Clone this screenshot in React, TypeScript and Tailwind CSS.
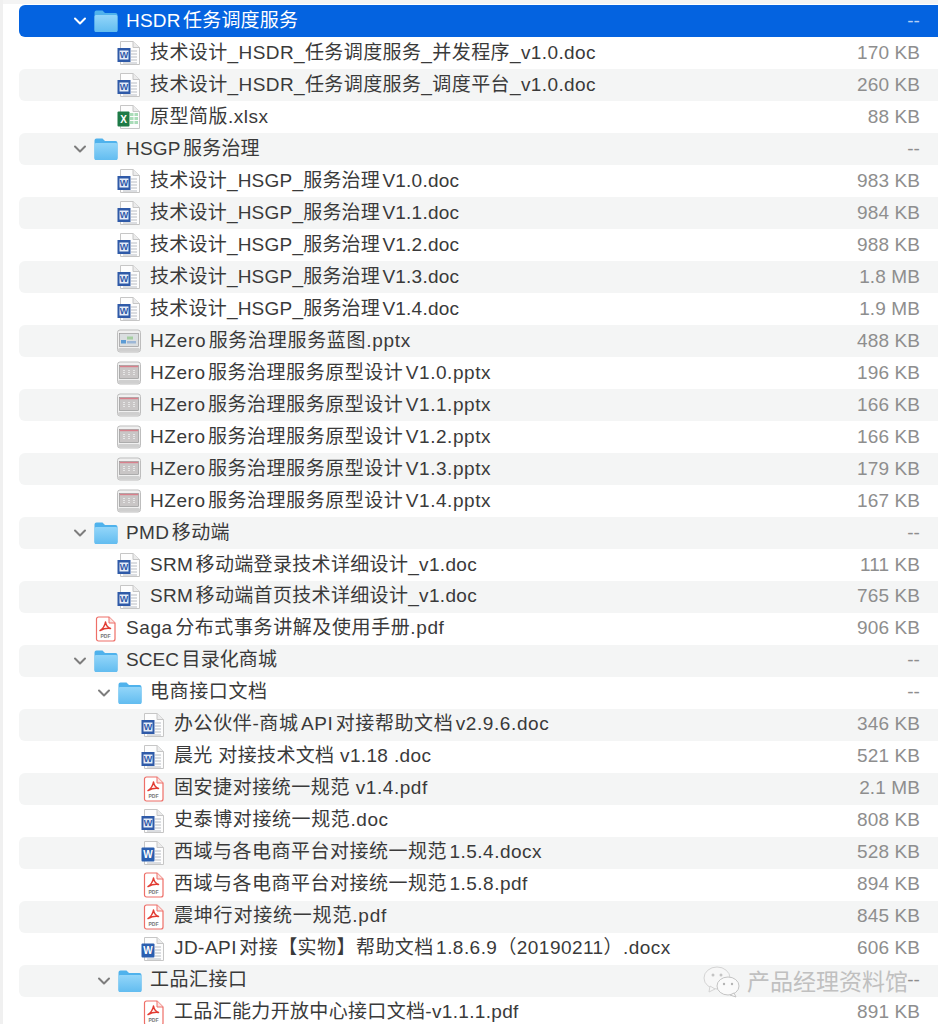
import React from "react";

type Kind = "folder" | "word" | "wordnew" | "excel" | "ppt" | "pptblue" | "pdf";
type Row = { name: string; size: string; kind: Kind; level: number; t: string };

const rows: Row[] = [
  { name: "HSDR任务调度服务", size: "--", kind: "folder", level: 0, t: "tracking-[0.2px]" },
  { name: "技术设计_HSDR_任务调度服务_并发程序_v1.0.doc", size: "170 KB", kind: "word", level: 1, t: "tracking-[0.4px]" },
  { name: "技术设计_HSDR_任务调度服务_调度平台_v1.0.doc", size: "260 KB", kind: "word", level: 1, t: "tracking-[0.4px]" },
  { name: "原型简版.xlsx", size: "88 KB", kind: "excel", level: 1, t: "tracking-[0.5px]" },
  { name: "HSGP服务治理", size: "--", kind: "folder", level: 0, t: "tracking-[0.2px]" },
  { name: "技术设计_HSGP_服务治理V1.0.doc", size: "983 KB", kind: "word", level: 1, t: "tracking-[0.22px]" },
  { name: "技术设计_HSGP_服务治理V1.1.doc", size: "984 KB", kind: "word", level: 1, t: "tracking-[0.22px]" },
  { name: "技术设计_HSGP_服务治理V1.2.doc", size: "988 KB", kind: "word", level: 1, t: "tracking-[0.22px]" },
  { name: "技术设计_HSGP_服务治理V1.3.doc", size: "1.8 MB", kind: "word", level: 1, t: "tracking-[0.22px]" },
  { name: "技术设计_HSGP_服务治理V1.4.doc", size: "1.9 MB", kind: "word", level: 1, t: "tracking-[0.22px]" },
  { name: "HZero服务治理服务蓝图.pptx", size: "488 KB", kind: "pptblue", level: 1, t: "tracking-[0.7px]" },
  { name: "HZero服务治理服务原型设计V1.0.pptx", size: "196 KB", kind: "ppt", level: 1, t: "tracking-[0.55px]" },
  { name: "HZero服务治理服务原型设计V1.1.pptx", size: "166 KB", kind: "ppt", level: 1, t: "tracking-[0.55px]" },
  { name: "HZero服务治理服务原型设计V1.2.pptx", size: "166 KB", kind: "ppt", level: 1, t: "tracking-[0.55px]" },
  { name: "HZero服务治理服务原型设计V1.3.pptx", size: "179 KB", kind: "ppt", level: 1, t: "tracking-[0.55px]" },
  { name: "HZero服务治理服务原型设计V1.4.pptx", size: "167 KB", kind: "ppt", level: 1, t: "tracking-[0.55px]" },
  { name: "PMD移动端", size: "--", kind: "folder", level: 0, t: "tracking-[0.4px]" },
  { name: "SRM移动端登录技术详细设计_v1.doc", size: "111 KB", kind: "word", level: 1, t: "tracking-[0.33px]" },
  { name: "SRM移动端首页技术详细设计_v1.doc", size: "765 KB", kind: "word", level: 1, t: "tracking-[0.33px]" },
  { name: "Saga分布式事务讲解及使用手册.pdf", size: "906 KB", kind: "pdf", level: 0, t: "tracking-[0.6px]" },
  { name: "SCEC目录化商城", size: "--", kind: "folder", level: 0, t: "tracking-[0.1px]" },
  { name: "电商接口文档", size: "--", kind: "folder", level: 1, t: "tracking-[0.6px]" },
  { name: "办公伙伴-商城API对接帮助文档v2.9.6.doc", size: "346 KB", kind: "word", level: 2, t: "tracking-[0.6px]" },
  { name: "晨光 对接技术文档 v1.18 .doc", size: "521 KB", kind: "word", level: 2, t: "tracking-[0.35px]" },
  { name: "固安捷对接统一规范 v1.4.pdf", size: "2.1 MB", kind: "pdf", level: 2, t: "tracking-[0.55px]" },
  { name: "史泰博对接统一规范.doc", size: "808 KB", kind: "word", level: 2, t: "tracking-[0.6px]" },
  { name: "西域与各电商平台对接统一规范1.5.4.docx", size: "528 KB", kind: "wordnew", level: 2, t: "tracking-[0.5px]" },
  { name: "西域与各电商平台对接统一规范1.5.8.pdf", size: "894 KB", kind: "pdf", level: 2, t: "tracking-[0.5px]" },
  { name: "震坤行对接统一规范.pdf", size: "845 KB", kind: "pdf", level: 2, t: "tracking-[0.8px]" },
  { name: "JD-API对接【实物】帮助文档1.8.6.9（20190211）.docx", size: "606 KB", kind: "wordnew", level: 2, t: "tracking-[0.45px]" },
  { name: "工品汇接口", size: "--", kind: "folder", level: 1, t: "tracking-[0.5px]" },
  { name: "工品汇能力开放中心接口文档-v1.1.1.pdf", size: "891 KB", kind: "pdf", level: 2, t: "tracking-[0.33px]" },
];

const Sheet = ({ children }: { children?: React.ReactNode }) => (
  <svg width="24" height="26" viewBox="0 0 24 26" className="shrink-0">
    <path d="M3.500 1.500h12.500l6.500 6v17h-19z" fill="#fdfdfd" stroke="#c6c6c6" strokeWidth="1" />
    <path d="M16 1.500v6h6.500" fill="#ebebeb" stroke="#c6c6c6" strokeWidth="1" />
    {children}
  </svg>
);

const Lines = () => (
  <path d="M14 11h6M14 14h6M14 17h6M14 20h6M6 23h14" stroke="#b9bdc4" strokeWidth="1" />
);

function Icon({ kind }: { kind: Kind }) {
  if (kind === "folder")
    return (
      <svg width="24" height="24" viewBox="0 0 24 24" className="shrink-0">
        <defs>
          <linearGradient id="fld" x1="0" y1="0" x2="0" y2="1">
            <stop offset="0" stopColor="#93d6f9" />
            <stop offset="1" stopColor="#62bcf0" />
          </linearGradient>
        </defs>
        <path d="M0.500 3.500a2 2 0 0 1 2-2h6l2.500 2.500h10.500a2 2 0 0 1 2 2v15a2 2 0 0 1-2 2h-19a2 2 0 0 1-2-2z" fill="#4fb2ec" />
        <path d="M0.500 7.500a1.500 1.500 0 0 1 1.500-1.500h20a1.500 1.500 0 0 1 1.500 1.500v14a1.500 1.500 0 0 1-1.500 1.500h-20a1.500 1.500 0 0 1-1.500-1.500z" fill="url(#fld)" />
      </svg>
    );
  if (kind === "word")
    return (
      <Sheet>
        <Lines />
        <rect x="0.500" y="8" width="13" height="14" fill="#2f5aa8" />
        <rect x="2.500" y="10.500" width="9" height="9" fill="#e6edf8" />
        <text x="7" y="18" fontSize="9" fontWeight="700" textAnchor="middle" fill="#2f5aa8" fontFamily="Liberation Sans, sans-serif">W</text>
      </Sheet>
    );
  if (kind === "wordnew")
    return (
      <Sheet>
        <Lines />
        <rect x="0.500" y="7.500" width="13" height="14" rx="1" fill="#2b5fb0" />
        <text x="7" y="18" fontSize="10" fontWeight="700" textAnchor="middle" fill="#ffffff" fontFamily="Liberation Sans, sans-serif">W</text>
      </Sheet>
    );
  if (kind === "excel")
    return (
      <Sheet>
        <g fill="#a9dcb8">
          <rect x="13" y="9" width="3.500" height="3" />
          <rect x="17.500" y="9" width="3.500" height="3" />
          <rect x="13" y="13" width="3.500" height="3" />
          <rect x="17.500" y="13" width="3.500" height="3" />
          <rect x="13" y="17" width="3.500" height="3" />
          <rect x="17.500" y="17" width="3.500" height="3" />
        </g>
        <rect x="0.500" y="7.500" width="12" height="15" rx="1" fill="#1d7a46" />
        <text x="6.500" y="18.500" fontSize="10" fontWeight="700" textAnchor="middle" fill="#ffffff" fontFamily="Liberation Sans, sans-serif">X</text>
      </Sheet>
    );
  if (kind === "ppt" || kind === "pptblue")
    return (
      <svg width="24" height="24" viewBox="0 0 24 24" className="shrink-0">
        <rect x="0.500" y="1" width="23" height="22" rx="2.500" fill="#f0f0f0" stroke="#bdbdbd" />
        <rect x="1" y="19" width="22" height="3.500" rx="1.500" fill="#cfcfcf" />
        <rect x="2.500" y="4.500" width="19" height="13" fill={kind === "ppt" ? "#c9c6c6" : "#dadee0"} stroke="#8d8d8d" strokeWidth="0.600" />
        {kind === "ppt" ? (
          <g>
            <rect x="2.800" y="4.800" width="18.400" height="1.400" fill="#d9808c" />
            <path d="M7 9v6M12 9v6M17 9v6" stroke="#e6e6e6" strokeWidth="2" strokeDasharray="1 1" />
          </g>
        ) : (
          <g>
            <rect x="4" y="11" width="5" height="3.500" fill="#5b9bd5" />
            <rect x="10" y="7.500" width="6" height="3" fill="#a4cda0" />
            <rect x="10" y="12" width="9" height="2.500" fill="#9db7d6" />
          </g>
        )}
      </svg>
    );
  return (
    <svg width="24" height="26" viewBox="0 0 24 26" className="shrink-0">
      <path d="M3.500 3a2 2 0 0 1 2-2h10.500l6 6v16a2 2 0 0 1-2 2h-14.500a2 2 0 0 1-2-2z" fill="#fff" stroke="#ee6f68" strokeWidth="1.200" />
      <path d="M16 1v6h6" fill="#fbe3e1" stroke="#ee6f68" strokeWidth="1" />
      <path d="M12.500 6c-.5 3-2.500 6.500-5.500 8.500 3-1.500 7-2.500 10.500-2-3-1-4.500-3.500-5-6.500z" fill="none" stroke="#e23c33" strokeWidth="1.500" strokeLinejoin="round" />
      <text x="12.500" y="21.500" fontSize="5" fontWeight="700" textAnchor="middle" fill="#777" fontFamily="Liberation Sans, sans-serif">PDF</text>
    </svg>
  );
}

const Chevron = ({ white }: { white: boolean }) => (
  <svg width="14" height="10" viewBox="0 0 14 10" className="shrink-0">
    <path d="M2 2.500l5 5 5-5" fill="none" stroke={white ? "#ffffff" : "#7d7d7d"} strokeWidth="2" strokeLinecap="round" strokeLinejoin="round" />
  </svg>
);

const folderPad = ["pl-[54px]", "pl-[78px]"];
const filePad = ["pl-[74px]", "pl-[98px]", "pl-[122px]"];

export default function App() {
  return (
    <div
      className="relative h-[1024px] w-[938px] overflow-hidden bg-white border-l-[3px] border-[#f0f0f0] pt-[5px] [text-autospace:normal]"
      style={{ fontFamily: '"Liberation Sans", "Noto Sans CJK SC", sans-serif' }}
    >
      <div className="absolute left-0 right-0 top-0 h-[4px] bg-[#f4f4f4]" />
      <div className="relative ml-[16px] flex flex-col">
        {rows.map((r, i) => {
          const selected = i === 0;
          const folder = r.kind === "folder";
          const pad = folder ? folderPad[r.level] : filePad[r.level];
          const bg = selected ? "bg-[#0463e0]" : i % 2 === 0 ? "bg-[#f4f5f5]" : "bg-white";
          const lift = i < 18 ? "pb-0" : "pb-[2px]";
          return (
            <div key={i} className={`flex h-[32px] items-center rounded-l-[6px] pr-[18px] ${bg} ${pad}`}>
              {folder && <div className="mr-[7px] flex w-[14px] justify-center"><Chevron white={selected} /></div>}
              <div className="flex w-[24px] justify-center"><Icon kind={r.kind} /></div>
              <span className={`flex-1 whitespace-nowrap text-[19px] ${lift} ${r.t} ${folder ? "ml-[8px]" : "ml-[9px]"} ${selected ? "text-white" : "text-[#3a3a3a]"}`}>{r.name}</span>
              <span className={`whitespace-nowrap text-[19px] tracking-[0.1px] ${lift} ${selected ? "text-[#b4d0f5]" : "text-[#8e8e8e]"}`}>{r.size}</span>
            </div>
          );
        })}
      </div>
      <div className="absolute left-[700px] top-[965px] flex items-center gap-[6px]">
        <svg width="38" height="32" viewBox="0 0 38 32">
          <ellipse cx="14" cy="12" rx="13" ry="11" fill="#f7f7f7" stroke="#d4d4d4" />
          <path d="M7 20l-1 6 6-3z" fill="#f7f7f7" stroke="#d4d4d4" />
          <ellipse cx="25" cy="20" rx="11" ry="9" fill="#fafafa" stroke="#c4c4c4" />
          <path d="M31 27l2 4-6-2z" fill="#fafafa" stroke="#c4c4c4" />
          <circle cx="10" cy="9" r="1.500" fill="#c4c4c4" />
          <circle cx="18" cy="9" r="1.500" fill="#c4c4c4" />
          <circle cx="21" cy="18" r="1.200" fill="#b4b4b4" />
          <circle cx="29" cy="18" r="1.200" fill="#b4b4b4" />
        </svg>
        <span className="whitespace-nowrap text-[23px] text-[#c0c0c0]">产品经理资料馆</span>
      </div>
    </div>
  );
}
